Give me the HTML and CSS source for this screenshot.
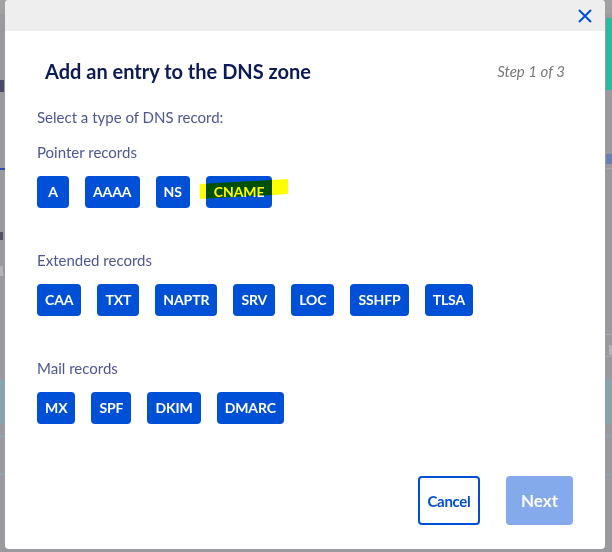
FILE: index.html
```html
<!DOCTYPE html>
<html lang="en">
<head>
<meta charset="utf-8">
<title>Add an entry to the DNS zone</title>
<link rel="stylesheet" href="styles.css">
</head>
<body>
<div class="page">
  <div class="backdrop">
    <div class="bg-row bg-top"></div>
    <div class="bg-row bg-gap4"></div>
    <div class="bg-row bg-teal-row"><span class="bg-left bg-dark-frag"></span><span class="bg-right bg-teal"></span></div>
    <div class="bg-row bg-h68"></div>
    <div class="bg-row bg-lu"><span class="bg-left"></span><span class="bg-right bg-lu-frag"></span></div>
    <div class="bg-row bg-line1"><span class="bg-left bg-blue"></span><span class="bg-right bg-grayline"></span></div>
    <div class="bg-row bg-h64"></div>
    <div class="bg-row bg-a"><span class="bg-left bg-dark-small"></span><span class="bg-right"></span></div>
    <div class="bg-row bg-h24"></div>
    <div class="bg-row bg-c"><span class="bg-left bg-gray-small"></span><span class="bg-right"></span></div>
    <div class="bg-row bg-h58"></div>
    <div class="bg-row bg-line2"><span class="bg-left"></span><span class="bg-right bg-lightline"></span></div>
    <div class="bg-row bg-o"><span class="bg-left"></span><span class="bg-right bg-gray-small"></span></div>
    <div class="bg-row bg-line2"><span class="bg-left"></span><span class="bg-right bg-lightline"></span></div>
    <div class="bg-row bg-h20"></div>
    <div class="bg-row bg-band"></div>
    <div class="bg-row bg-h12"></div>
    <div class="bg-row bg-line3"></div>
    <div class="bg-row bg-h37"></div>
    <div class="bg-row bg-line3"></div>
  </div>

  <div class="modal" role="dialog" aria-labelledby="modal-title">
    <div class="modal-header">
      <button class="close" aria-label="Close">
        <svg width="14" height="14" viewBox="0 0 14 14"><path d="M1 1 L13 13 M13 1 L1 13" stroke="#0050d7" stroke-width="2" fill="none" stroke-linecap="butt"/></svg>
      </button>
    </div>
    <div class="modal-body">
      <div class="title-row">
        <h2 id="modal-title" class="title">Add an entry to the DNS zone</h2>
        <span class="step">Step 1 of 3</span>
      </div>
      <p class="intro">Select a type of DNS record:</p>

      <section class="group">
        <h3 class="group-label">Pointer records</h3>
        <div class="btns">
          <button class="rec">A</button>
          <button class="rec">AAAA</button>
          <button class="rec">NS</button>
          <span class="hl-wrap">
            <button class="rec">CNAME</button>
            <svg class="highlight" width="88" height="32" viewBox="0 0 88 32"><polygon points="0,8 88,3 88,18 0,23" fill="#ffff00"/></svg>
          </span>
        </div>
      </section>

      <section class="group">
        <h3 class="group-label">Extended records</h3>
        <div class="btns">
          <button class="rec">CAA</button>
          <button class="rec">TXT</button>
          <button class="rec">NAPTR</button>
          <button class="rec">SRV</button>
          <button class="rec">LOC</button>
          <button class="rec">SSHFP</button>
          <button class="rec">TLSA</button>
        </div>
      </section>

      <section class="group">
        <h3 class="group-label">Mail records</h3>
        <div class="btns">
          <button class="rec">MX</button>
          <button class="rec">SPF</button>
          <button class="rec">DKIM</button>
          <button class="rec">DMARC</button>
        </div>
      </section>
    </div>
    <div class="modal-footer">
      <button class="btn-cancel">Cancel</button>
      <button class="btn-next" disabled>Next</button>
    </div>
  </div>
</div>
</body>
</html>
```

FILE: styles.css
```css
* { box-sizing: border-box; }

html, body {
  margin: 0;
  padding: 0;
}

body {
  width: 612px;
  height: 552px;
  overflow: hidden;
  background: #9a9a9e;
  font-family: Lato, "Open Sans", sans-serif;
}

.page {
  position: relative;
  width: 612px;
  height: 552px;
}

/* ---------- dimmed page behind the dialog ---------- */
.backdrop {
  display: flex;
  flex-direction: column;
  width: 612px;
  height: 552px;
}

.bg-row {
  display: flex;
  justify-content: space-between;
  flex: none;
}

.bg-left { width: 5px; }
.bg-right { width: 6px; }

.bg-top { height: 14px; background: #a1a1a4; }
.bg-gap4 { height: 4px; }
.bg-teal-row { height: 72px; align-items: flex-end; }
.bg-teal { height: 72px; background: #2bb9a0; }
.bg-dark-frag { height: 12px; width: 4px; background: #4a4b68; margin-bottom: -2px; }
.bg-h68 { height: 64px; }
.bg-lu { height: 10px; }
.bg-lu-frag { height: 10px; width: 6px; background: #6a7eb4; }
.bg-line1 { height: 2px; margin-top: 4px; }
.bg-blue { background: #2a4fa6; }
.bg-grayline { background: #a9abb2; height: 1px; }
.bg-h64 { height: 62px; }
.bg-a { height: 8px; }
.bg-dark-small { width: 3px; background: #505165; }
.bg-h24 { height: 26px; }
.bg-c { height: 10px; }
.bg-gray-small { width: 3px; background: #b4b4b8; }
.bg-h58 { height: 58px; }
.bg-line2 { height: 1px; margin-bottom: 10px; }
.bg-lightline { background: #a7aeb6; }
.bg-o { height: 10px; margin-bottom: 1px; }
.bg-h20 { height: 12px; }
.bg-band { height: 45px; background: #8aa3ab; }
.bg-h12 { height: 12px; }
.bg-line3 { height: 1px; background: #86abbf; }
.bg-h37 { height: 37px; }

/* ---------- dialog ---------- */
.modal {
  position: absolute;
  left: 5px;
  top: 0;
  width: 600px;
  height: 549px;
  background: #ffffff;
  border-radius: 4px;
  overflow: hidden;
  display: flex;
  flex-direction: column;
}

.modal-header {
  height: 31px;
  flex: none;
  background: #edeeed;
  display: flex;
  justify-content: flex-end;
  align-items: center;
  padding-right: 13px;
}

.close {
  border: 0;
  background: transparent;
  padding: 0;
  width: 14px;
  height: 14px;
  display: block;
  cursor: pointer;
}

.close svg { display: block; }

.modal-body {
  flex: 1;
  padding: 28px 32px 0 32px;
}

.title-row {
  display: flex;
  justify-content: space-between;
  align-items: center;
  padding: 0 8px;
  height: 24px;
}

.title {
  margin: 0;
  font-family: Lato, "Open Sans", sans-serif;
  font-weight: 700;
  font-size: 20px;
  line-height: 24px;
  color: #0c1a56;
}

.step {
  font-style: italic;
  font-size: 15px;
  color: #777779;
  line-height: 24px;
}

.intro {
  margin: 24px 0 0 0;
  font-size: 15px;
  line-height: 20px;
  color: #4d5693;
}

.group { margin-top: 15px; }
.group + .group { margin-top: 42px; }

.group-label {
  margin: 0;
  font-weight: 400;
  font-size: 15px;
  line-height: 20px;
  color: #4d5693;
}

.btns {
  display: flex;
  gap: 16px;
  margin-top: 14px;
}

.rec {
  height: 32px;
  min-width: 32px;
  padding: 0 8px;
  border: 0;
  border-radius: 4px;
  background: #0050d7;
  color: #ffffff;
  font-family: Lato, "Open Sans", sans-serif;
  font-weight: 700;
  font-size: 14px;
  letter-spacing: -0.1px;
  line-height: 32px;
  cursor: pointer;
}

.hl-wrap {
  position: relative;
  display: block;
}

.hl-wrap .rec { display: block; }

.highlight {
  position: absolute;
  left: -6px;
  top: 0;
  mix-blend-mode: multiply;
  pointer-events: none;
}

.modal-footer {
  flex: none;
  display: flex;
  justify-content: flex-end;
  gap: 26px;
  padding: 0 32px 24px 0;
}

.btn-cancel,
.btn-next {
  height: 49px;
  border-radius: 4px;
  font-family: Lato, "Open Sans", sans-serif;
  font-weight: 700;
  cursor: pointer;
}

.btn-cancel {
  width: 62px;
  padding: 0;
  background: #ffffff;
  border: 2px solid #0050d7;
  color: #0050d7;
  font-size: 15px;
  letter-spacing: -0.3px;
}

.btn-next {
  width: 67px;
  padding: 0;
  border: 0;
  background: #85aaeb;
  color: #ffffff;
  font-size: 17px;
}
```
